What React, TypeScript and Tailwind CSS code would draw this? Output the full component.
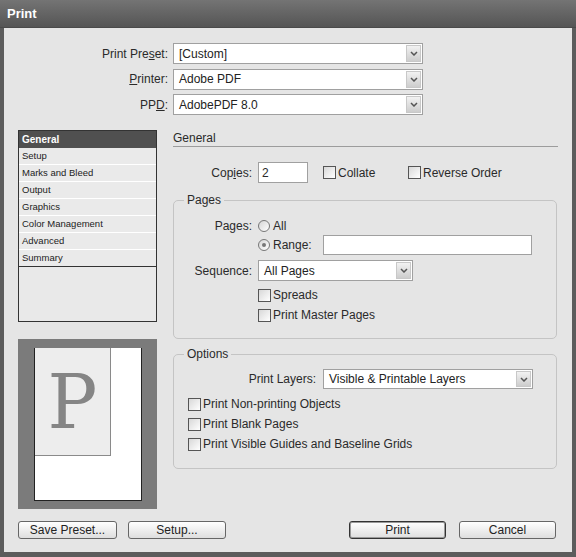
import React from "react";

function Chevron() {
  return (
    <svg width="8" height="5" viewBox="0 0 8 5">
      <path d="M1 1 L4 4 L7 1" fill="none" stroke="#555" strokeWidth="1.5" />
    </svg>
  );
}

function Select({ value, className }: { value: string; className: string }) {
  return (
    <div className={`flex items-stretch bg-white border border-[#a0a0a0] ${className}`}>
      <span className="flex-1 flex items-center pl-[5px] text-[12px] text-[#222] whitespace-nowrap">{value}</span>
      <span className="w-[15px] m-[1px] flex items-center justify-center bg-gradient-to-b from-[#f2f2f2] to-[#cdcdcd] border border-[#c8c8c8]">
        <Chevron />
      </span>
    </div>
  );
}

function Checkbox() {
  return <span className="w-[13px] h-[13px] shrink-0 border border-[#555] bg-gradient-to-br from-[#d8d8d8] to-white" />;
}

function Radio({ on }: { on?: boolean }) {
  return (
    <span className="w-[12px] h-[12px] shrink-0 rounded-full border border-[#777] bg-gradient-to-br from-[#d6d6d6] to-white flex items-center justify-center">
      {on ? <span className="w-[4px] h-[4px] rounded-full bg-[#777]" /> : null}
    </span>
  );
}

function Button({ label, className }: { label: string; className: string }) {
  return (
    <div
      className={`h-[18px] flex items-center justify-center rounded-[3px] bg-gradient-to-b from-white to-[#dedede] text-[12px] text-[#222] ${className}`}
    >
      {label}
    </div>
  );
}

const listItems = ["Setup", "Marks and Bleed", "Output", "Graphics", "Color Management", "Advanced", "Summary"];

export default function App() {
  return (
    <div className="w-[576px] h-[557px] bg-[#5c5c5c] flex flex-col font-['Liberation_Sans',Arial,sans-serif] text-[#2a2a2a] overflow-hidden">
      {/* Title bar */}
      <div className="h-[28px] shrink-0 flex items-center pl-[7px] bg-gradient-to-b from-[#747474] to-[#555] border-b border-[#4a4a4a]">
        <span className="text-white font-bold text-[13px]">Print</span>
      </div>

      {/* Body */}
      <div className="mx-[4px] h-[524px] bg-[#e5e5e5] flex flex-col">
        {/* Top selects */}
        <div className="pt-[15px] flex flex-col gap-[4.5px]">
          <div className="flex items-center h-[21px]">
            <span className="w-[164px] text-right text-[12px]">
              Print Pre<span className="underline">s</span>et:
            </span>
            <Select value="[Custom]" className="ml-[5px] w-[250px] h-[21px]" />
          </div>
          <div className="flex items-center h-[21px]">
            <span className="w-[164px] text-right text-[12px]">
              <span className="underline">P</span>rinter:
            </span>
            <Select value="Adobe PDF" className="ml-[5px] w-[250px] h-[21px]" />
          </div>
          <div className="flex items-center h-[21px]">
            <span className="w-[164px] text-right text-[12px]">
              PP<span className="underline">D</span>:
            </span>
            <Select value="AdobePDF 8.0" className="ml-[5px] w-[250px] h-[21px]" />
          </div>
        </div>

        {/* Main */}
        <div className="mt-[15px] h-[379px] flex">
          {/* Left column */}
          <div className="ml-[14px] w-[139px] flex flex-col">
            <div className="h-[192px] border border-[#333] bg-[#e9e9e9] flex flex-col">
              <div className="h-[17px] shrink-0 bg-[#505050] flex items-center pl-[3px] text-white font-bold text-[10px]">
                General
              </div>
              {listItems.map((it, i) => (
                <div
                  key={it}
                  className={`h-[17px] shrink-0 flex items-center pl-[3px] text-[9.5px] text-[#222] bg-[#eaeaea] ${
                    i === listItems.length - 1 ? "border-b border-[#333]" : "border-b border-white"
                  }`}
                >
                  {it}
                </div>
              ))}
            </div>
            <div className="mt-[17px] h-[170px] bg-[#7b7b7b] pl-[16px] pt-[9px]">
              <div className="w-[108px] h-[153px] bg-white border border-[#222] border-t-0">
                <div className="w-[76px] h-[108px] bg-[#ededed] border-r border-b border-[#8a8a8a] flex items-center justify-center">
                  <span className="font-['DejaVu_Serif',serif] text-[74px] leading-none text-[#858585]">P</span>
                </div>
              </div>
            </div>
          </div>

          {/* Right column */}
          <div className="ml-[16px] w-[385px] flex flex-col">
            <div className="h-[17px] text-[12px] leading-[16px] border-b border-[#9c9c9c]">General</div>

            <div className="mt-[15px] h-[21px] flex items-center text-[12px]">
              <span className="w-[79px] text-right">
                Cop<span className="underline">i</span>es:
              </span>
              <div className="ml-[6px] w-[50px] h-[21px] bg-white border border-[#a0a0a0] flex items-center pl-[3px]">2</div>
              <div className="ml-[15px] w-[85px] flex items-center gap-[2px]">
                <Checkbox />
                <span>Collate</span>
              </div>
              <div className="flex items-center gap-[2px]">
                <Checkbox />
                <span>Reverse Order</span>
              </div>
            </div>

            {/* Pages */}
            <fieldset className="mt-[9px] w-[384px] border border-[#c4c4c4] rounded-[5px] pb-[15px] text-[12px]">
              <legend className="ml-[10px] px-[3px] leading-[16px]">Pages</legend>
              <div className="mt-[8px] h-[19px] flex items-center">
                <span className="w-[78px] text-right">Pages:</span>
                <span className="ml-[6px]">
                  <Radio />
                </span>
                <span className="ml-[3px]">All</span>
              </div>
              <div className="h-[20px] flex items-center pl-[84px]">
                <Radio on />
                <span className="ml-[3px] w-[50px]">Range:</span>
                <div className="w-[209px] h-[20px] bg-white border border-[#a0a0a0]" />
              </div>
              <div className="mt-[5px] h-[21px] flex items-center">
                <span className="w-[78px] text-right">Sequence:</span>
                <Select value="All Pages" className="ml-[6px] w-[155px] h-[21px]" />
              </div>
              <div className="mt-[6px] h-[16px] flex items-center pl-[84px] gap-[2px]">
                <Checkbox />
                <span>Spreads</span>
              </div>
              <div className="mt-[4px] h-[16px] flex items-center pl-[84px] gap-[2px]">
                <Checkbox />
                <span>Print Master Pages</span>
              </div>
            </fieldset>

            {/* Options */}
            <fieldset className="mt-[7px] w-[384px] border border-[#c4c4c4] rounded-[5px] pb-[14px] text-[12px]">
              <legend className="ml-[10px] px-[3px] leading-[16px]">Options</legend>
              <div className="mt-[7px] h-[20px] flex items-center">
                <span className="w-[142px] text-right">Print Layers:</span>
                <Select value="Visible & Printable Layers" className="ml-[7px] w-[210px] h-[20px]" />
              </div>
              <div className="mt-[5px] h-[20px] flex items-center pl-[14px] gap-[2px]">
                <Checkbox />
                <span>Print Non-printing Objects</span>
              </div>
              <div className="h-[20px] flex items-center pl-[14px] gap-[2px]">
                <Checkbox />
                <span>Print Blank Pages</span>
              </div>
              <div className="h-[20px] flex items-center pl-[14px] gap-[2px]">
                <Checkbox />
                <span>Print Visible Guides and Baseline Grids</span>
              </div>
            </fieldset>
          </div>
        </div>

        {/* Buttons */}
        <div className="mt-[12px] flex justify-between pl-[14px] pr-[16px]">
          <div className="flex gap-[11px]">
            <Button label="Save Preset..." className="w-[99px] border border-[#666]" />
            <Button label="Setup..." className="w-[98px] border border-[#666]" />
          </div>
          <div className="flex gap-[13px]">
            <Button label="Print" className="w-[97px] border border-[#333] shadow-[inset_0_0_0_1px_#9a9a9a]" />
            <Button label="Cancel" className="w-[97px] border border-[#666]" />
          </div>
        </div>
      </div>
    </div>
  );
}
